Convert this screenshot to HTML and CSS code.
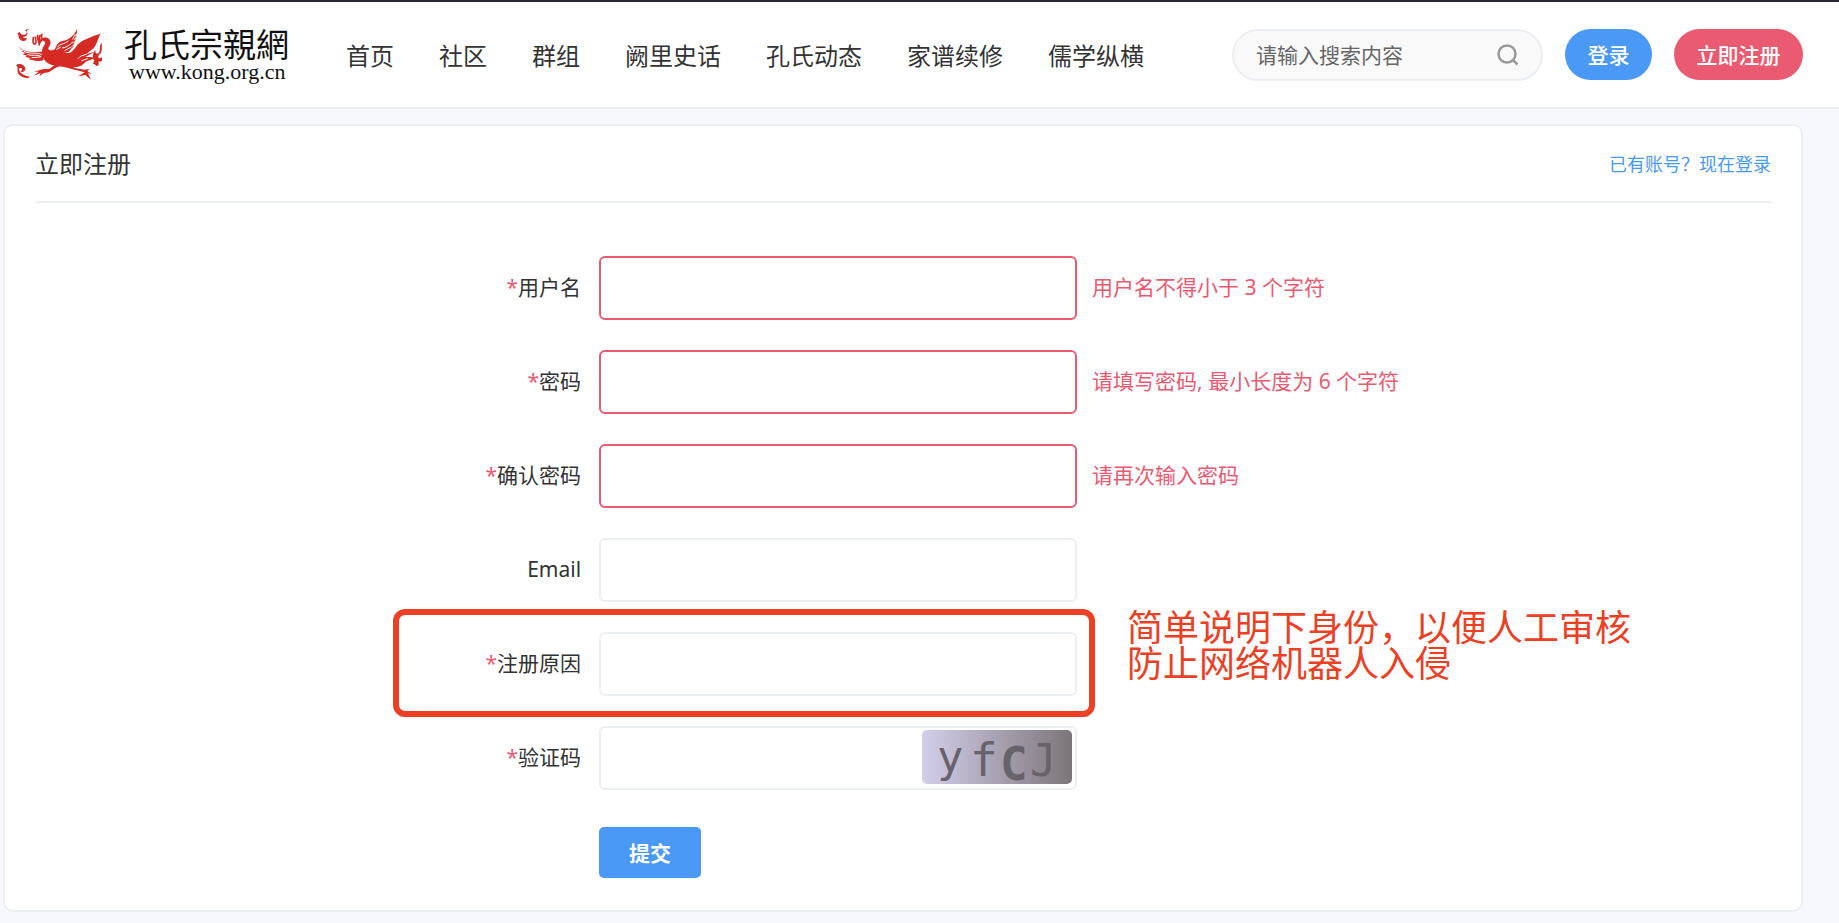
FILE: index.html
```html
<!DOCTYPE html>
<html lang="zh-CN">
<head>
    <meta charset="UTF-8">
    <meta name="viewport" content="width=device-width, initial-scale=1.0">
    <title>立即注册 - 孔氏宗親網</title>
    <link rel="stylesheet" href="styles.css">
</head>
<body>
    <header class="header">
        <a href="#" class="logo">
            <svg class="logo-bird" viewBox="0 0 288 186" aria-hidden="true">
                <g fill="#d62a24">
                    <!-- body, neck and tail -->
                    <path d="M82 50C88 40 102 37 111 45C119 53 115 63 110 70C106 77 112 80 121 79C134 71 148 80 161 86C175 91 184 79 192 68C204 49 229 45 242 37C252 32 260 31 266 29C260 38 257 52 250 65C243 78 229 82 224 90L248 83L220 99C232 98 243 99 248 103C239 108 224 108 217 118C207 128 195 129 184 131L217 137L233 134L226 141L239 151L228 148L237 167L220 153L198 157L218 145L176 134C155 128 142 124 132 131L116 141C108 148 101 144 92 149L82 157L86 147L64 156L80 143L66 143L91 136L113 134L127 124C108 122 94 109 91 93C88 81 91 70 99 60C102 52 94 48 90 51C87 57 82 58 79 65Z"/>
                    <!-- left wing -->
                    <path d="M22 66C27 78 42 83 60 84L91 83L95 107C85 113 72 112 61 108L50 106L55 102L40 99L45 95L32 91L40 87L28 82L36 80C27 76 22 72 22 66Z"/>
                    <!-- right wing -->
                    <path d="M195 15C187 35 170 48 151 51C139 54 134 62 128 78L148 81C161 90 174 84 176 76L186 67L179 68L190 55L181 59L193 45L184 49L195 35L188 38C195 29 197 22 195 15Z"/>
                    <!-- clouds -->
                    <path d="M51 15C40 20 49 29 38 32C31 34 25 30 23 23L15 30C22 30 17 40 25 47C32 54 44 52 45 42C39 43 35 43 33 39C45 39 50 28 43 22C36 20 43 15 51 15Z"/>
                    <path d="M12 124C20 116 35 120 39 130C43 139 35 148 24 142C31 140 33 134 27 132C20 130 19 139 27 147C34 155 46 156 55 159C43 166 26 159 20 151C12 141 22 130 12 124Z"/>
                    <path d="M270 56C259 66 267 78 260 87C255 92 248 86 250 77C242 87 240 100 247 110L243 119C254 121 252 131 260 122L260 112C268 115 273 110 269 98C262 108 254 99 263 91C273 82 268 66 270 56Z"/>
                </g>
                <g fill="none" stroke="#d62a24" stroke-width="5" stroke-linecap="round">
                    <path d="M64 41C62 51 63 62 69 60C75 57 71 46 70 40M77 34C73 42 80 48 81 57M84 35C78 42 84 48 82 63M90 31C86 34 91 38 88 43"/>
                </g>
                <g fill="none" stroke="#fff" stroke-width="3" stroke-linecap="round">
                    <path d="M36 82C53 91 73 84 88 91M47 92C62 97 75 90 87 97M60 101L85 99M137 69C145 57 157 62 169 51M151 72C164 71 174 62 182 54M159 79L178 69M134 76L145 70M182 45L189 32M223 91C213 95 205 94 199 103M226 104L209 110"/>
                </g>
            </svg>
            <span class="logo-text">
                <strong>孔氏宗親網</strong>
                <span>www.kong.org.cn</span>
            </span>
        </a>
        <nav class="nav">
            <a href="#">首页</a>
            <a href="#">社区</a>
            <a href="#">群组</a>
            <a href="#">阙里史话</a>
            <a href="#">孔氏动态</a>
            <a href="#">家谱续修</a>
            <a href="#">儒学纵横</a>
        </nav>
        <form class="search">
            <input type="text" placeholder="请输入搜索内容" aria-label="搜索">
            <button type="submit" aria-label="搜索">
                <svg viewBox="0 0 22 22" width="22" height="22">
                    <circle cx="10" cy="10" r="8.5"/>
                    <path d="M16 16l4.5 4.5"/>
                </svg>
            </button>
        </form>
        <button type="button" class="pill pill-login">登录</button>
        <button type="button" class="pill pill-register">立即注册</button>
    </header>

    <main class="card">
        <div class="card-head">
            <h1>立即注册</h1>
            <a href="#">已有账号？现在登录</a>
        </div>
        <form class="form">
            <div class="row">
                <label for="username"><i>*</i>用户名</label>
                <input type="text" id="username" class="error">
                <span class="hint">用户名不得小于 3 个字符</span>
            </div>
            <div class="row">
                <label for="password"><i>*</i>密码</label>
                <input type="password" id="password" class="error">
                <span class="hint">请填写密码, 最小长度为 6 个字符</span>
            </div>
            <div class="row">
                <label for="password2"><i>*</i>确认密码</label>
                <input type="password" id="password2" class="error">
                <span class="hint">请再次输入密码</span>
            </div>
            <div class="row">
                <label for="email">Email</label>
                <input type="email" id="email">
            </div>
            <div class="row">
                <label for="reason"><i>*</i>注册原因</label>
                <input type="text" id="reason">
                <div class="mark"></div>
                <p class="note">简单说明下身份，以便人工审核<br>防止网络机器人入侵</p>
            </div>
            <div class="row">
                <label for="captcha"><i>*</i>验证码</label>
                <div class="captcha">
                    <input type="text" id="captcha">
                    <svg class="captcha-code" viewBox="0 0 150 54" role="img" aria-label="验证码图片">
                        <text x="15" y="42" font-size="44">y</text>
                        <text x="48" y="46" font-size="46">f</text>
                        <text x="78" y="50" font-size="46" font-weight="bold">C</text>
                        <text x="108" y="46" font-size="44">J</text>
                    </svg>
                </div>
            </div>
            <div class="row">
                <button type="submit" class="submit">提交</button>
            </div>
        </form>
    </main>
</body>
</html>
```

FILE: styles.css
```css
* {
    box-sizing: border-box;
}
body {
    margin: 0;
    background: #f6f8fc;
    color: #333;
    font-family: "Noto Sans", "Noto Sans CJK SC", sans-serif;
    font-size: 21px;
    line-height: 30px;
}
a {
    color: inherit;
    text-decoration: none;
}
input,
button {
    font: inherit;
    outline: none;
}
button {
    border: 0;
    padding: 0;
    cursor: pointer;
}

/* header */
.header {
    display: flex;
    align-items: center;
    height: 109px;
    padding: 0 36px 0 12px;
    background: #fff;
    border-top: 2px solid #2b2a30;
    border-bottom: 2px solid #ebedf1;
}
.logo {
    display: flex;
    align-items: center;
    gap: 16px;
    color: #111;
}
.logo-bird {
    width: 96px;
    height: 62px;
}
.logo-text strong {
    display: block;
    font-size: 33px;
    font-weight: 400;
    line-height: 34px;
}
.logo-text span {
    display: block;
    padding-left: 5px;
    font-family: "Liberation Serif", serif;
    font-size: 22px;
    line-height: 20px;
}
.nav {
    display: flex;
    gap: 45px;
    margin-left: 57px;
    padding-top: 3px;
    font-size: 24px;
    white-space: nowrap;
}
.search {
    display: flex;
    align-items: center;
    width: 311px;
    height: 52px;
    margin-left: auto;
    padding: 0 22px;
    background: #f9f9f9;
    border: 2px solid #ebeef2;
    border-radius: 26px;
}
.search input {
    flex: 1;
    min-width: 0;
    padding: 0;
    border: 0;
    background: none;
}
.search input::placeholder {
    color: #666;
    opacity: 1;
}
.search button {
    display: flex;
    background: none;
}
.search svg {
    fill: none;
    stroke: #999;
    stroke-width: 2.5;
}
.pill {
    width: 87px;
    height: 51px;
    margin-left: 22px;
    border-radius: 26px;
    color: #fff;
    font-weight: 500;
}
.pill-login {
    background: #4a99f6;
}
.pill-register {
    width: 129px;
    background: #ea5a70;
}

/* register card */
.card {
    margin: 15px 36px 12px 3px;
    padding: 0 30px 32px;
    background: #fff;
    border: 2px solid #ebeef2;
    border-radius: 10px;
}
.card-head {
    display: flex;
    align-items: center;
    justify-content: space-between;
    height: 77px;
    border-bottom: 2px solid #ebeef2;
}
.card-head h1 {
    margin: 0;
    font-size: 24px;
    font-weight: 400;
}
.card-head a {
    color: #4a99f6;
    font-size: 18px;
}
.form {
    display: flex;
    flex-direction: column;
    gap: 30px;
    padding-top: 53px;
}
.row {
    position: relative;
    display: grid;
    grid-template-columns: calc(31.4% + 19px) 478px 1fr;
    align-items: center;
}
.row label {
    padding: 0 18px 2px 0;
    text-align: right;
}
.row label i {
    color: #ea5a70;
    font-style: normal;
}
.row input {
    width: 100%;
    height: 64px;
    padding: 0 16px;
    background: #fff;
    border: 2px solid #ebeef2;
    border-radius: 6px;
}
.row input.error {
    border-color: #ea5a70;
}
.hint {
    padding: 0 0 2px 15px;
    color: #ea5a70;
}

/* highlighted field and its note */
.mark {
    position: absolute;
    top: -23px;
    bottom: -21px;
    left: calc(31.4% - 187px);
    width: 702px;
    border: 6px solid #ec4025;
    border-radius: 12px;
    pointer-events: none;
}
.note {
    position: absolute;
    top: -25px;
    left: calc(31.4% + 547px);
    margin: 0;
    color: #ec4025;
    font-family: "Noto Sans CJK SC", sans-serif;
    font-size: 36px;
    line-height: 36px;
    white-space: nowrap;
}

.captcha {
    position: relative;
}
.captcha input {
    display: block;
    padding-right: 166px;
}
.captcha-code {
    position: absolute;
    top: 4px;
    right: 5px;
    width: 150px;
    height: 54px;
    border-radius: 5px;
    background: linear-gradient(to right, #d3cfea, #7c7579);
    fill: #67636a;
    font-family: "DejaVu Sans Mono", monospace;
}
.submit {
    grid-column: 2;
    justify-self: start;
    height: 51px;
    margin-top: 7px;
    padding: 0 30px;
    background: #4a99f6;
    border-radius: 5px;
    color: #fff;
    font-weight: 700;
}
```
